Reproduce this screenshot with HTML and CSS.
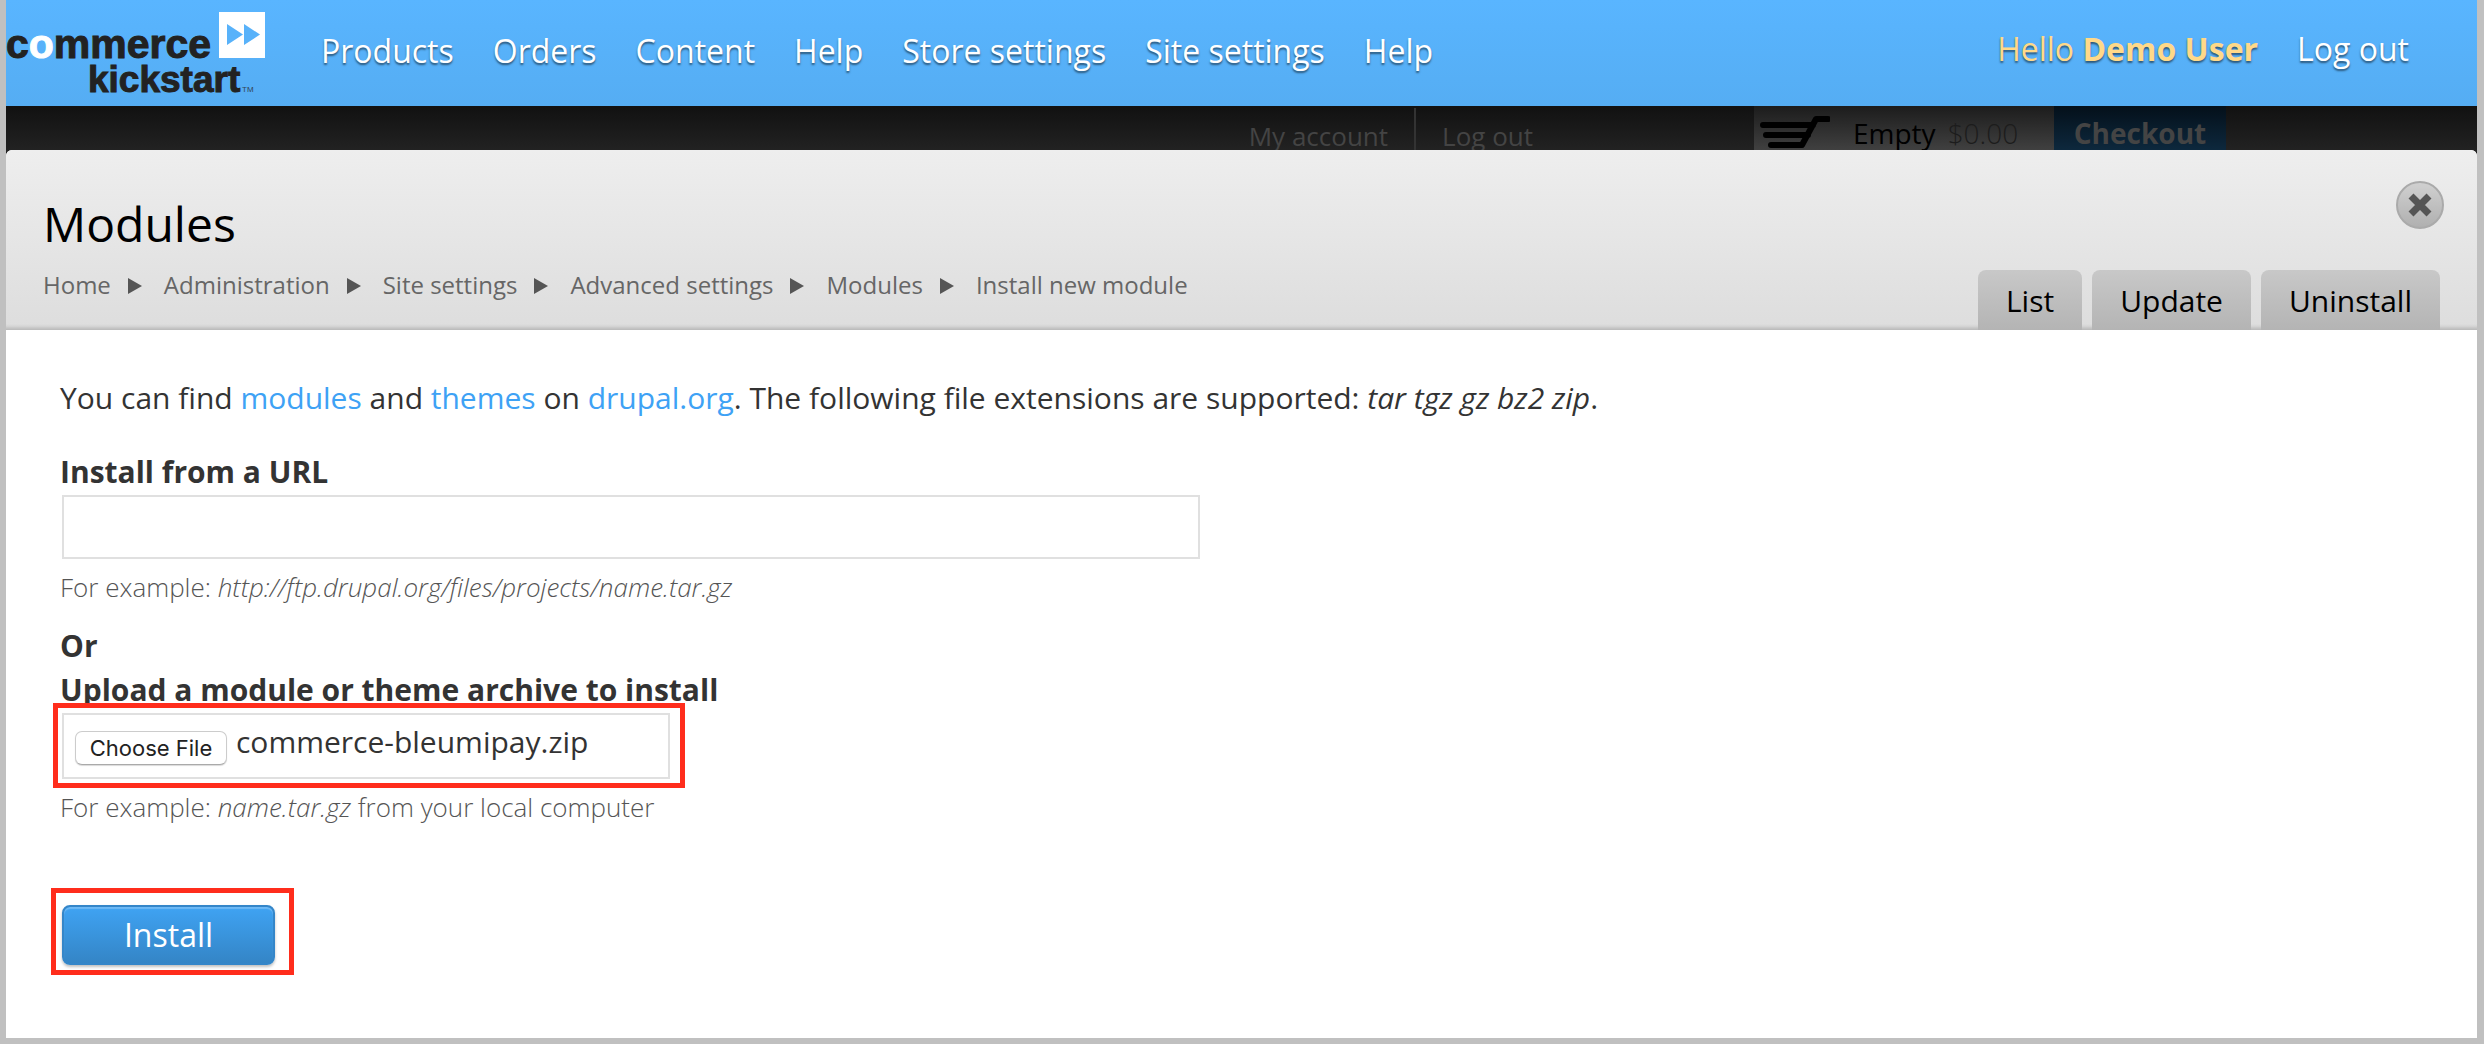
FILE: index.html
```html
<!DOCTYPE html>
<html lang="en">
<head>
<meta charset="utf-8">
<title>Modules | Commerce Kickstart</title>
<link rel="stylesheet" href="styles.css">
</head>
<body>
<header class="toolbar">
  <a class="logo" href="#" aria-label="Commerce Kickstart">
    <svg width="268" height="104" viewBox="0 0 268 104">
      <text class="logo-word logo-top" x="0" y="57">c<tspan class="logo-o">o</tspan>mmerce</text>
      <text class="logo-word logo-bottom" x="82" y="91">kickstart</text>
      <text class="logo-tm" x="236" y="91">TM</text>
      <rect x="213" y="11" width="46" height="46" fill="#fff"/>
      <path d="M221 23l16 10.500l-16 10.500zM238 23l16 10.500l-16 10.500z" fill="#58b2fa"/>
    </svg>
  </a>
  <nav class="menu">
    <a href="#">Products</a>
    <a href="#">Orders</a>
    <a href="#">Content</a>
    <a href="#">Help</a>
    <a href="#">Store settings</a>
    <a href="#">Site settings</a>
    <a href="#">Help</a>
  </nav>
  <div class="account">
    <a class="hello" href="#">Hello <strong>Demo User</strong></a>
    <a href="#">Log out</a>
  </div>
</header>

<div class="storefront">
  <nav class="store-links">
    <a href="#">My account</a>
    <a href="#">Log out</a>
  </nav>
  <div class="cart">
    <svg width="70" height="36" viewBox="0 0 70 36">
      <path d="M68 5h-12l-14 26h-31M3 11h50M6 21h42" fill="none" stroke="#000" stroke-width="6" stroke-linecap="round" stroke-linejoin="round"/>
    </svg>
    <span>Empty</span>
    <span class="total">$0.00</span>
  </div>
  <a class="checkout" href="#">Checkout</a>
</div>

<div class="overlay">
  <header class="overlay-head">
    <div class="heading">
      <h1>Modules</h1>
      <nav class="breadcrumb">
        <a href="#">Home</a>
        <a href="#">Administration</a>
        <a href="#">Site settings</a>
        <a href="#">Advanced settings</a>
        <a href="#">Modules</a>
        <a href="#">Install new module</a>
      </nav>
    </div>
    <div class="side">
      <button class="close" type="button" aria-label="Close">
        <svg width="24" height="24" viewBox="0 0 24 24"><path d="M3 3L21 21M21 3L3 21" stroke="#555" stroke-width="7"/></svg>
      </button>
      <nav class="tabs">
        <a href="#">List</a>
        <a href="#">Update</a>
        <a href="#">Uninstall</a>
      </nav>
    </div>
  </header>

  <main class="content">
    <p class="intro">You can find <a href="#">modules</a> and <a href="#">themes</a> on <a href="#">drupal.org</a>. The following file extensions are supported: <em>tar tgz gz bz2 zip</em>.</p>
    <form>
      <label class="label" for="url">Install from a URL</label>
      <input class="url" id="url" type="text">
      <p class="hint">For example: <em>http://ftp.drupal.org/files/projects/name.tar.gz</em></p>
      <p class="label or">Or</p>
      <label class="label" for="archive">Upload a module or theme archive to install</label>
      <div class="marked upload">
        <input class="visually-hidden" id="archive" type="file">
        <button class="choose" type="button">Choose File</button>
        <span>commerce-bleumipay.zip</span>
      </div>
      <p class="hint">For example: <em>name.tar.gz</em> from your local computer</p>
      <div class="marked submit"><button class="install" type="submit">Install</button></div>
    </form>
  </main>
</div>
</body>
</html>
```
FILE: styles.css
```css
* {
  box-sizing: border-box;
}

body {
  margin: 0;
  min-height: 100vh;
  display: flex;
  flex-direction: column;
  border: solid #c0c0c0;
  border-width: 0 7px 6px 6px;
  background: #222;
  color: #333;
  font: 30px/44px "Open Sans", sans-serif;
}

a {
  color: inherit;
  text-decoration: none;
}

h1,
p {
  margin: 0;
}

.toolbar {
  display: flex;
  align-items: center;
  height: 106px;
  padding-right: 68px;
  background: linear-gradient(#59b5ff, #55adf3);
  color: #fff;
  font-size: 32px;
  text-shadow: 0 2px 2px rgba(0, 0, 0, .5);
}

.logo {
  display: block;
  height: 104px;
  text-shadow: none;
}

.logo-word {
  fill: #222;
  font-family: "Liberation Sans", sans-serif;
  font-weight: 700;
}

.logo-top {
  stroke: #222;
  font-size: 41px;
}

.logo-bottom {
  stroke: #222;
  font-size: 37px;
}

.logo-o {
  fill: #fff;
  stroke: #fff;
}

.logo-tm {
  fill: #345;
  font: 8px "Liberation Sans", sans-serif;
}

.menu {
  display: flex;
  gap: 39px;
  margin-left: 47px;
  padding-bottom: 4px;
}

.account {
  display: flex;
  gap: 39px;
  margin-left: auto;
  padding-bottom: 8px;
}

.hello {
  color: #ffd989;
}

.hello strong {
  font-weight: 700;
}

.storefront {
  display: flex;
  height: 44px;
  padding-right: 251px;
  overflow: hidden;
  justify-content: flex-end;
  background: linear-gradient(#111, #222);
  color: #444;
  font-size: 26px;
}

.store-links {
  display: flex;
  margin-right: 221px;
  padding-top: 2px;
  line-height: 56px;
}

.store-links a + a {
  margin-left: 26px;
  padding-left: 26px;
  border-left: 2px solid #333;
}

.cart {
  display: flex;
  width: 300px;
  padding: 8px 0 0 6px;
  background: linear-gradient(#1c1c1c, #404040);
  color: #000;
  font-size: 28px;
  line-height: 38px;
}

.cart svg {
  margin-right: 23px;
}

.total {
  margin-left: 12px;
  color: #1c1c1c;
  font-weight: 300;
}

.checkout {
  width: 172px;
  padding-top: 8px;
  background: linear-gradient(#04101a, #0d283d);
  font-size: 28px;
  font-weight: 700;
  line-height: 38px;
  text-align: center;
}

.overlay {
  flex: 1;
  border-radius: 6px 6px 0 0;
  background: #fff;
  overflow: hidden;
}

.overlay-head {
  display: flex;
  justify-content: space-between;
  height: 180px;
  padding: 0 37px;
  background: linear-gradient(#eee, #ddd);
  box-shadow: inset 0 -6px 4px -4px rgba(0, 0, 0, .2);
}

.heading {
  padding-top: 40px;
}

h1 {
  color: #000;
  font-size: 48px;
  font-weight: 400;
  line-height: 68px;
}

.breadcrumb {
  display: flex;
  padding-top: 10px;
  color: #666;
  font-size: 24px;
  line-height: 34px;
}

.breadcrumb a + a::before {
  content: "";
  display: inline-block;
  margin: 0 22px 0 17px;
  border: solid transparent;
  border-width: 8px 0 8px 14px;
  border-left-color: #555;
}

.side {
  display: flex;
  flex-direction: column;
  justify-content: space-between;
  align-items: flex-end;
  padding-top: 31px;
}

.close {
  display: flex;
  align-items: center;
  justify-content: center;
  width: 48px;
  height: 48px;
  margin-right: -4px;
  padding: 0;
  border: 2px solid #aaa;
  border-radius: 50%;
  background: linear-gradient(#d0d0d0, #b0b0b0);
}

.tabs {
  display: flex;
  gap: 10px;
}

.tabs a {
  height: 60px;
  padding: 0 28px;
  border-radius: 8px 8px 0 0;
  background: linear-gradient(#c8c8c8, #b4b4b4);
  color: #000;
  line-height: 62px;
}

.content {
  padding: 46px 54px;
}

.intro {
  margin-bottom: 30px;
}

.intro a {
  color: #3ea2f5;
}

.label {
  display: block;
  font-weight: 700;
}

.url {
  display: block;
  width: 1138px;
  max-width: 100%;
  height: 64px;
  margin: 1px 0 0 2px;
  padding: 0 14px;
  border: 2px solid #e0e0e0;
  font: inherit;
}

.hint {
  margin-top: 10px;
  color: #555;
  font-size: 26px;
  font-weight: 300;
  line-height: 36px;
}

.or {
  margin-top: 19px;
}

.marked {
  position: relative;
  width: fit-content;
  margin: 1px 0 0 2px;
}

/* red call-out frame */
.marked::after {
  content: "";
  position: absolute;
  border: 5px solid #ff2d1c;
  pointer-events: none;
}

.upload {
  display: flex;
  align-items: center;
  gap: 9px;
  width: 608px;
  height: 66px;
  padding: 0 11px;
  border: 2px solid #e0e0e0;
}

.upload::after {
  inset: -12px -17px -11px -11px;
}

.upload span {
  padding-bottom: 8px;
}

.visually-hidden {
  position: absolute;
  width: 1px;
  height: 1px;
  opacity: 0;
}

.choose {
  height: 34px;
  margin-top: 4px;
  padding: 0;
  width: 152px;
  border: 1px solid #ccc;
  border-bottom-color: #aaa;
  border-radius: 7px;
  background: #fff;
  box-shadow: 0 1px 1px rgba(0, 0, 0, .15);
  color: #222;
  font: 22px/32px Inter, sans-serif;
}

.submit {
  margin-top: 80px;
}

.submit::after {
  inset: -17px -19px -10px -11px;
}

.install {
  display: block;
  width: 213px;
  height: 60px;
  padding: 0;
  border: 2px solid #3486c9;
  border-radius: 8px;
  background: linear-gradient(#3fa3f3, #3485c6);
  box-shadow: inset 0 2px 1px rgba(255, 255, 255, .25), 0 2px 3px rgba(0, 0, 0, .25);
  color: #fff;
  font: 32px/44px "Open Sans", sans-serif;
}
```
